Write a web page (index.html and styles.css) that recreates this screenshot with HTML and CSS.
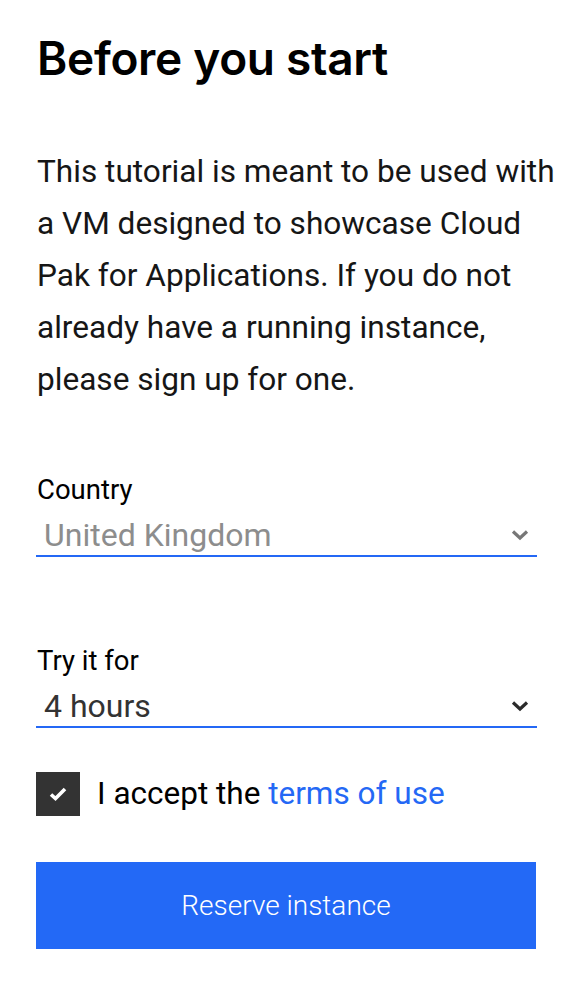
FILE: index.html
```html
<!DOCTYPE html>
<html lang="en">
<head>
<meta charset="utf-8">
<title>Before you start</title>
<link rel="stylesheet" href="styles.css">
</head>
<body>
<main class="page">
  <h1 class="title">Before you start</h1>
  <p class="intro">This tutorial is meant to be used with a VM designed to showcase Cloud Pak for Applications. If you do not already have a running instance, please sign up for one.</p>

  <div class="field field-country">
    <div class="label">Country</div>
    <div class="select placeholder">
      <span class="value">United Kingdom</span>
      <svg class="chev" width="18" height="12" viewBox="0 0 18 12"><path d="M2 2.5 L9 9 L16 2.5" fill="none" stroke="currentColor" stroke-width="3.2"/></svg>
    </div>
  </div>

  <div class="field field-time">
    <div class="label">Try it for</div>
    <div class="select">
      <span class="value">4 hours</span>
      <svg class="chev" width="18" height="12" viewBox="0 0 18 12"><path d="M2 2.5 L9 9 L16 2.5" fill="none" stroke="currentColor" stroke-width="3.2"/></svg>
    </div>
  </div>

  <div class="accept">
    <span class="box"><svg width="18" height="16" viewBox="0 0 18 16"><path d="M2 8.5 L6.5 12.5 L16 3" fill="none" stroke="#fff" stroke-width="3.6"/></svg></span>
    <span class="accept-text">I accept the <a class="link" href="#">terms of use</a></span>
  </div>

  <button class="btn" type="button">Reserve instance</button>
</main>
</body>
</html>
```
FILE: styles.css
```css
html, body { margin: 0; padding: 0; background: #fff; }
body { font-family: Roboto, "Noto Sans", sans-serif; color: #161616; }
.page { padding: 30px 0 0 37px; }
.title { margin: 0; font-family: Inter, Roboto, sans-serif; font-size: 46px; font-weight: 600; line-height: 56px; color: #000; letter-spacing: -0.3px; }
.intro { margin: 60px 0 0; max-width: 528px; font-size: 31.6px; line-height: 52px; font-weight: 400; color: #161616; }
.field { width: 500px; }
.field-country { margin-top: 67px; }
.field-time { margin-top: 87px; }
.label { font-size: 27.5px; line-height: 34px; color: #000; }
.select { display: flex; align-items: center; justify-content: space-between; padding: 8px 8px 0 8px; border-bottom: 2px solid #2468f5; margin-left: -1px; }
.value { font-size: 32px; line-height: 40px; color: #333; }
.placeholder .value { color: #8d8d8d; }
.chev { color: #2b2b2b; }
.placeholder .chev { color: #777; }
.accept { display: flex; align-items: center; margin-top: 44px; }
.box { width: 44px; height: 44px; background: #333; display: flex; align-items: center; justify-content: center; margin-left: -1px; }
.accept-text { margin-left: 17px; font-size: 31.5px; line-height: 44px; color: #000; }
.link { color: #2468f5; text-decoration: none; }
.btn { display: block; margin-top: 46px; width: 500px; height: 87px; margin-left: -1px; border: 0; background: #2369f6; color: #fff; font-family: Roboto, sans-serif; font-size: 28px; font-weight: 300; cursor: pointer; }
```
